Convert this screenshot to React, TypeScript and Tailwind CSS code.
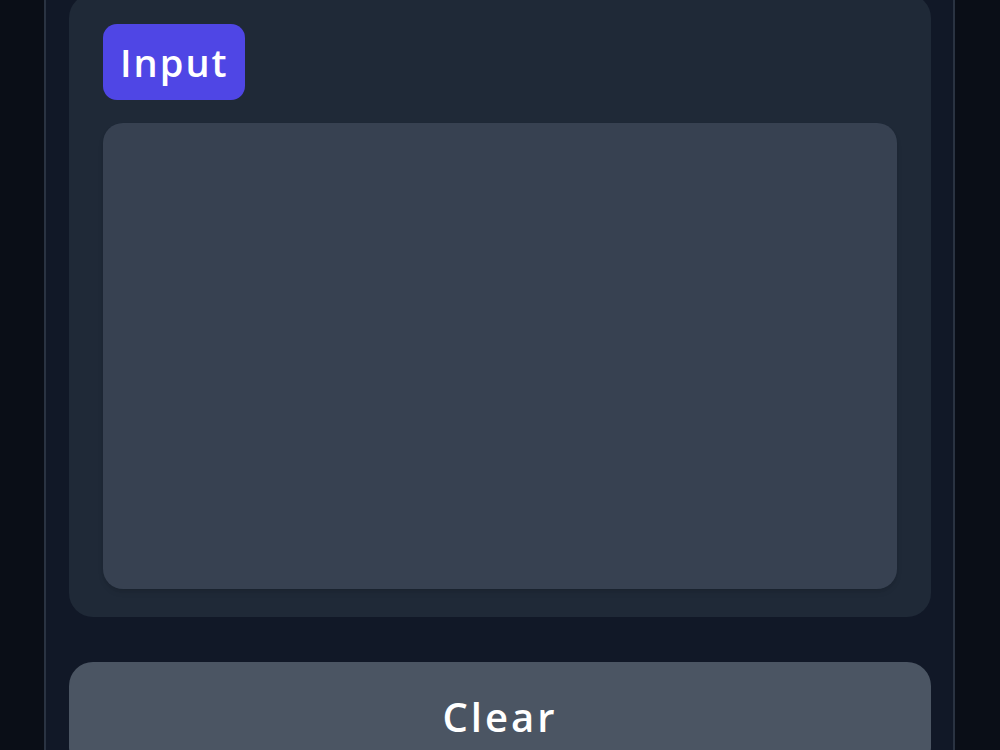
export default function App() {
  return (
    <div className="min-h-screen bg-[#0a0e17] font-['Open_Sans',sans-serif] overflow-hidden">
      <div className="ml-[44px] w-[911px] min-h-screen border-x-2 border-[#2a3342] bg-[#111827] pl-[23px] pr-[22px]">
        {/* editor card */}
        <div className="-mt-[6px] rounded-3xl bg-[#1f2937] px-[34px] pt-[30px] pb-[28px]">
          <div className="inline-flex h-[76px] items-center rounded-[14px] bg-[#4f46e5] pl-[17px] pr-[16px]">
            <span className="text-[38px] font-semibold leading-none tracking-[2px] text-white">Input</span>
          </div>
          <textarea
            className="mt-[23px] block h-[466px] w-full resize-none rounded-[20px] bg-[#374151] p-4 text-white shadow-md outline-none"
            spellCheck={false}
          />
        </div>

        <button className="mt-[45px] flex h-[110px] w-full items-center justify-center rounded-3xl bg-[#4b5563] text-[40px] font-semibold tracking-[3px] text-white">
          Clear
        </button>
      </div>
    </div>
  );
}
